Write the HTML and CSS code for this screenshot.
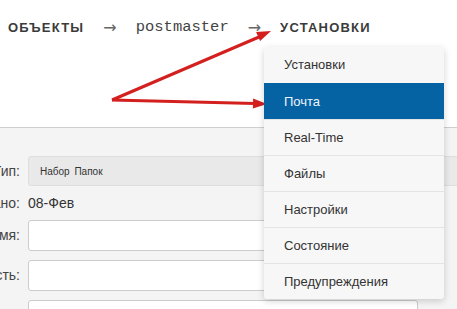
FILE: index.html
```html
<!DOCTYPE html>
<html lang="ru">
<head>
    <meta charset="UTF-8">
    <title>Установки</title>
    <link rel="stylesheet" href="styles.css">
</head>
<body>
    <div class="page">
        <div class="header">
            <div class="crumbs">
                <span class="crumb">ОБЪЕКТЫ</span>
                <span class="sep">&rarr;</span>
                <span class="crumb-mono">postmaster</span>
                <span class="sep">&rarr;</span>
                <span class="crumb">УСТАНОВКИ</span>
            </div>
        </div>

        <div class="form">
            <div class="row">
                <div class="label">Тип:</div>
                <div class="readonly">Набор Папок</div>
            </div>
            <div class="row row-text">
                <div class="label">Создано:</div>
                <div class="value">08-Фев</div>
            </div>
            <div class="row">
                <div class="label">Имя:</div>
                <div class="input"></div>
            </div>
            <div class="row">
                <div class="label">Видимость:</div>
                <div class="input"></div>
            </div>
            <div class="row">
                <div class="label"></div>
                <div class="input"></div>
            </div>
        </div>

        <!-- annotation arrows -->
        <svg class="arrows" width="457" height="309" viewBox="0 0 457 309">
            <line x1="112" y1="100" x2="259" y2="37" />
            <polygon points="271,31 260.1,41.1 256.1,31.9" />
            <line x1="112" y1="100" x2="255" y2="103.6" />
            <polygon points="267,104 252.9,108.6 253.1,98.6" />
        </svg>

        <ul class="menu">
            <li>Установки</li>
            <li class="active">Почта</li>
            <li>Real-Time</li>
            <li>Файлы</li>
            <li>Настройки</li>
            <li>Состояние</li>
            <li>Предупреждения</li>
        </ul>
    </div>
</body>
</html>
```

FILE: styles.css
```css
body {
    margin: 0;
    font-family: 'Liberation Sans', Arial, sans-serif;
    background-color: #f4f4f4;
    overflow: hidden;
}

.page {
    position: relative;
    width: 457px;
    height: 309px;
    overflow: hidden;
}

.header {
    height: 127px;
    background: #fff;
    border-bottom: 1px solid #cfcfcf;
}

.crumbs {
    display: flex;
    align-items: center;
    gap: 19px;
    padding: 18px 0 0 8px;
    color: #3b3b3b;
    height: 18px;
}

.crumb {
    font-weight: bold;
    font-size: 13px;
    letter-spacing: 1.2px;
}

.crumb-mono {
    font-family: 'Liberation Mono', 'DejaVu Sans Mono', monospace;
    font-size: 15.5px;
    color: #444;
}

.sep {
    font-family: 'DejaVu Sans', sans-serif;
    font-size: 16px;
    color: #666;
}

.form {
    display: flex;
    flex-direction: column;
    gap: 10px;
    padding-top: 28px;
}

.row {
    display: flex;
    align-items: center;
    gap: 8px;
    height: 30px;
}

.row-text {
    height: 14px;
}

.label {
    width: 20px;
    flex-shrink: 0;
    display: flex;
    justify-content: flex-end;
    white-space: nowrap;
    font-size: 14px;
    color: #444;
}

.readonly {
    width: 440px;
    flex-shrink: 0;
    height: 30px;
    line-height: 30px;
    padding-left: 11px;
    box-sizing: border-box;
    background: #e9e9e9;
    border: 1px solid #dedede;
    border-radius: 3px;
    font-size: 10px;
    word-spacing: 2px;
    color: #333;
}

.value {
    font-size: 14px;
    color: #333;
    line-height: 14px;
}

.input {
    width: 390px;
    height: 31px;
    box-sizing: border-box;
    background: #fff;
    border: 1px solid #cccccc;
    border-radius: 3px;
}

.arrows {
    position: absolute;
    left: 0;
    top: 0;
}

.arrows line {
    stroke: #d41f1f;
    stroke-width: 3;
}

.arrows polygon {
    fill: #d41f1f;
}

.menu {
    position: absolute;
    left: 264px;
    top: 47px;
    width: 180px;
    margin: 0;
    padding: 0;
    list-style: none;
    background: #f7f7f7;
    border-radius: 3px;
    box-shadow: 0 2px 7px rgba(0, 0, 0, 0.18);
    overflow: hidden;
}

.menu li {
    height: 36px;
    line-height: 36px;
    padding-left: 20px;
    font-size: 13px;
    color: #333;
    border-top: 1px solid #e4e4e4;
    box-sizing: border-box;
}

.menu li:first-child {
    border-top: none;
}

.menu li.active {
    background: #0563a3;
    color: #eef4fa;
    border-top-color: #0563a3;
}
```
